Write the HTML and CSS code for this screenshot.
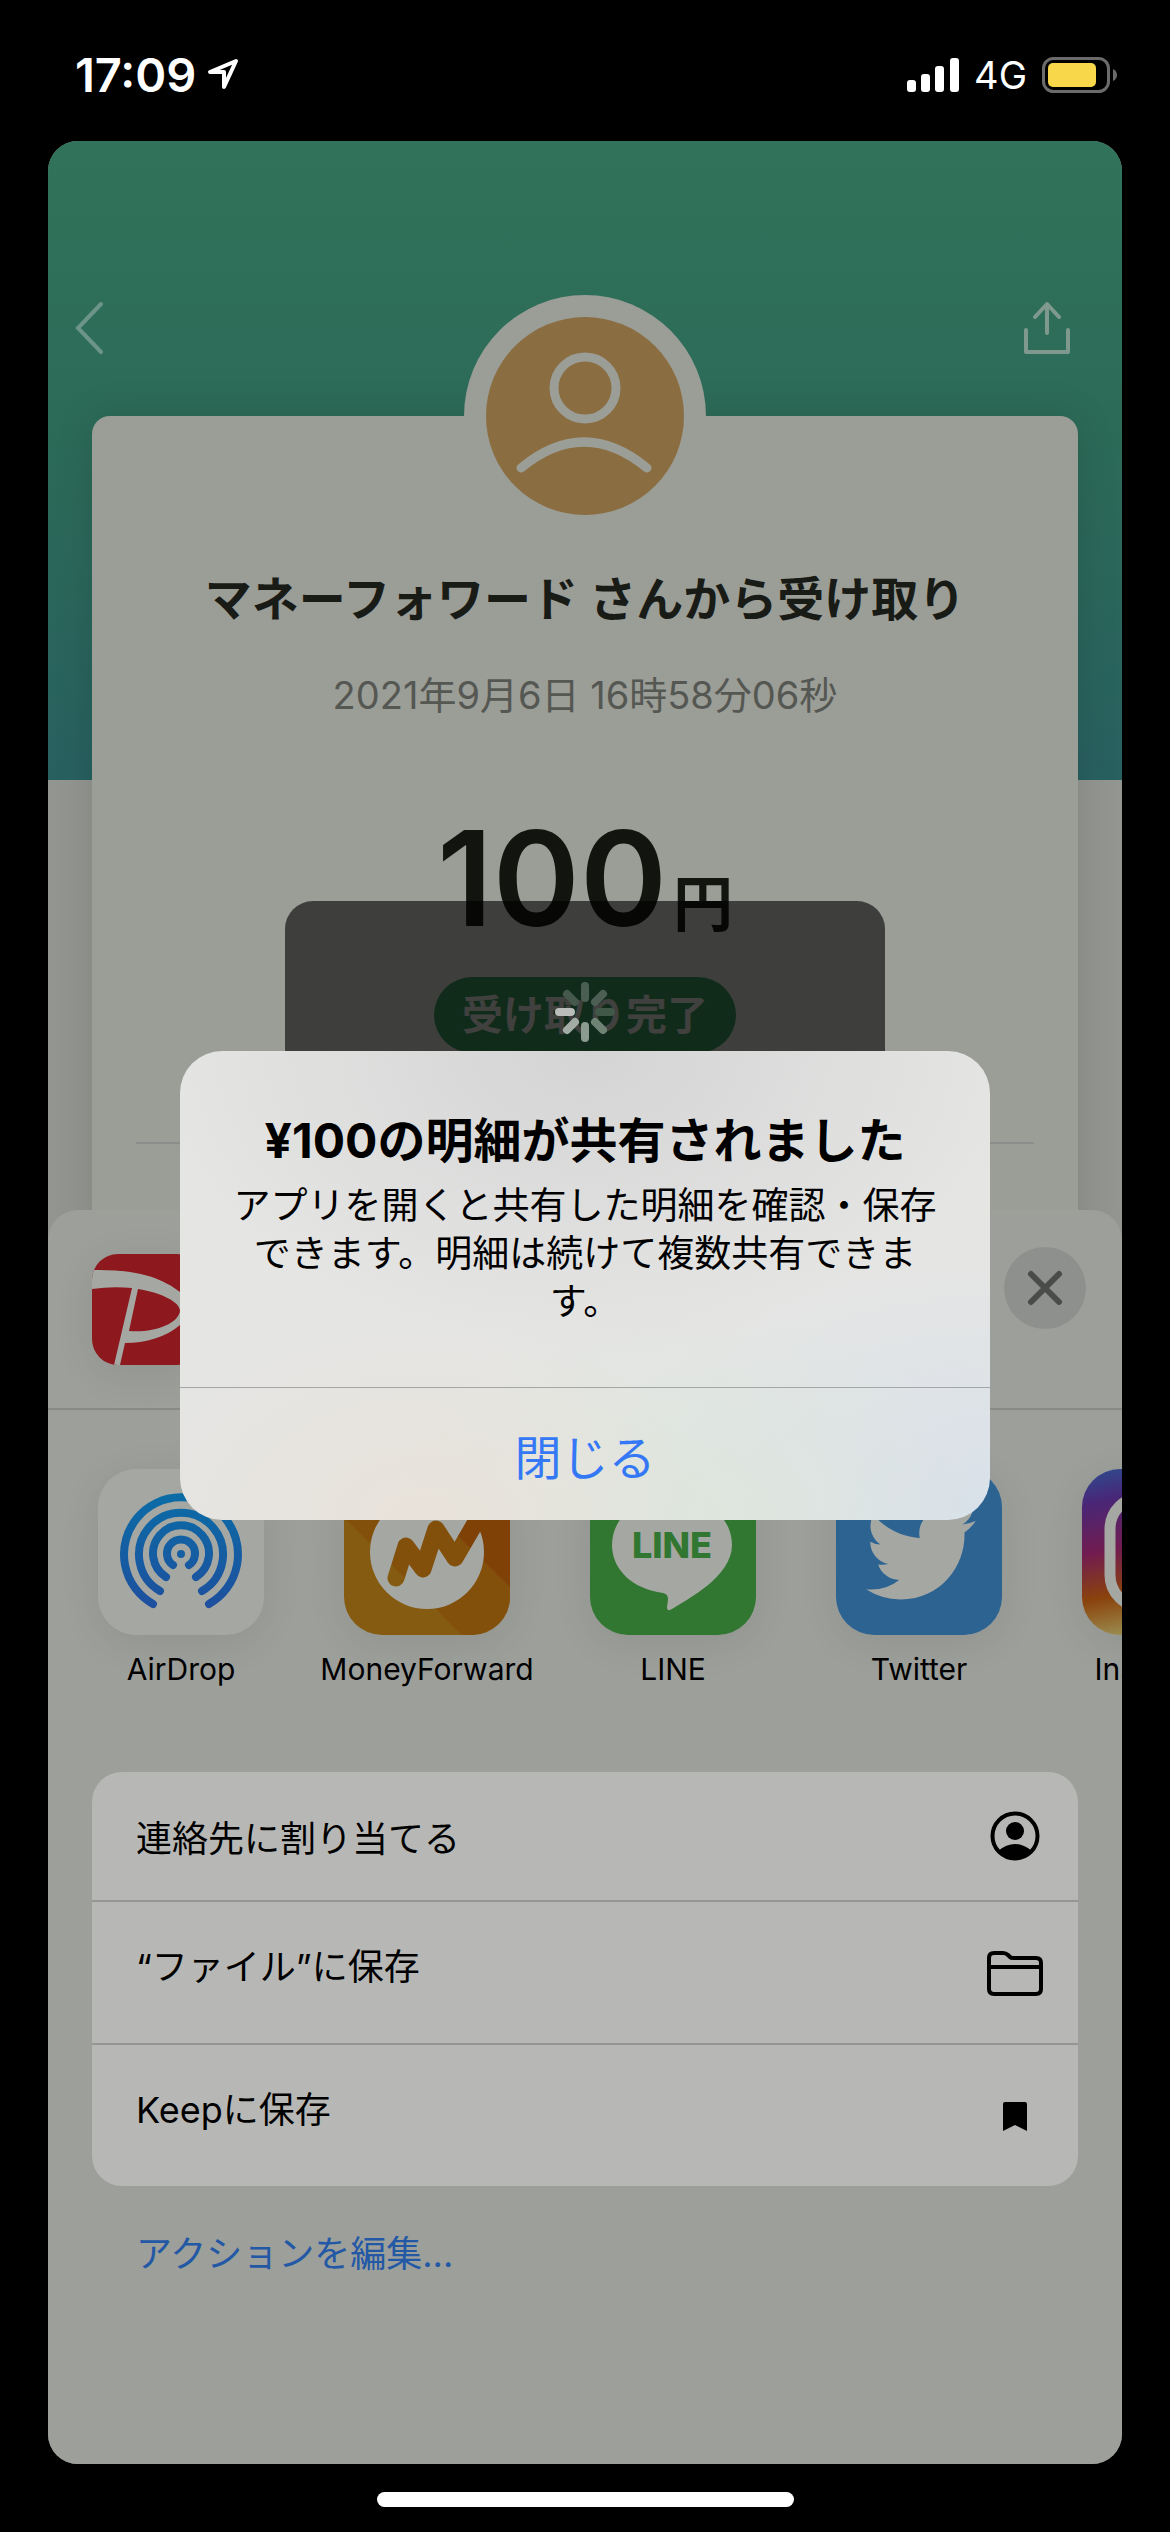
FILE: index.html
```html
<!doctype html>
<html lang="ja">
<head>
<meta charset="utf-8">
<meta name="viewport" content="width=device-width">
<title>明細の共有</title>
<link rel="stylesheet" href="styles.css">
</head>

<body>

<header class="status">
    <div class="status-left">
        <span class="time">17:09</span>
        <svg width="34" height="34" viewBox="0 0 34 34"><path d="M30 3L4 14h14v15z" fill="none" stroke="#fff" stroke-width="4" stroke-linejoin="round"/></svg>
    </div>
    <div class="status-right">
        <svg width="52" height="34" viewBox="0 0 52 34" fill="#fff">
            <rect x="0" y="22" width="9" height="12" rx="3"/>
            <rect x="14" y="16" width="9" height="18" rx="3"/>
            <rect x="28" y="8" width="9" height="26" rx="3"/>
            <rect x="43" y="0" width="9" height="34" rx="3"/>
        </svg>
        <span class="network">4G</span>
        <svg width="76" height="36" viewBox="0 0 76 36">
            <rect x="1.5" y="1.5" width="65" height="33" rx="10" fill="none" stroke="#6b6b6b" stroke-width="3"/>
            <rect x="6" y="6" width="48" height="24" rx="5" fill="#f8d74a"/>
            <path d="M71 12q4 2 4 6t-4 6z" fill="#6b6b6b"/>
        </svg>
    </div>
</header>

<main class="screen">
    <section class="receipt">
        <nav class="nav">
            <button class="icon-button" aria-label="戻る">
                <svg width="30" height="54" viewBox="0 0 30 54"><path d="M27 3L4 27l23 24" fill="none" stroke="#6c9488" stroke-width="4" stroke-linecap="round"/></svg>
            </button>
            <button class="icon-button" aria-label="共有">
                <svg width="48" height="54" viewBox="0 0 48 54" fill="none" stroke="#80998f" stroke-width="4" stroke-linecap="round" stroke-linejoin="round"><path d="M24 32V4M12 16L24 3l12 13M3 29v22h42V29"/></svg>
            </button>
        </nav>
        <div class="card">
            <div class="avatar">
                <svg width="198" height="198" viewBox="0 0 198 198" fill="none" stroke="#9b9d97" stroke-width="9">
                    <circle cx="99" cy="99" r="99" fill="#8a6e41" stroke="none"/>
                    <circle cx="99" cy="71" r="31"/>
                    <path d="M35 151Q98 99 161 151" stroke-linecap="round"/>
                </svg>
            </div>
            <h1 class="sender">マネーフォワード さんから受け取り</h1>
            <p class="date">2021年9月6日 16時58分06秒</p>
            <p class="amount">100<span class="yen">円</span></p>
            <p class="state">受け取り完了</p>
            <hr class="card-line">
        </div>
        <!-- 読み込み中 -->
        <div class="hud">
            <svg width="64" height="64" viewBox="-32 -32 64 64" stroke-width="8" stroke-linecap="round">
                <path d="M0-14V-26" stroke="#4a5f51"/>
                <path d="M10-10l8-8" stroke="#4d5f54"/>
                <path d="M14 0H26" stroke="#415849"/>
                <path d="M10 10l8 8" stroke="#6f8375"/>
                <path d="M0 14V26" stroke="#8b9b90"/>
                <path d="M-10 10l-8 8" stroke="#a3aba5"/>
                <path d="M-14 0H-26" stroke="#b9bcb9"/>
                <path d="M-10-10l-8-8" stroke="#44594b"/>
            </svg>
        </div>
    </section>

    <section class="sheet">
        <div class="sheet-head">
            <svg class="tile small" width="111" height="111" viewBox="0 0 111 111">
                <rect width="111" height="111" fill="#8d181d"/>
                <path d="M0 16C45 15 70 24 88 38C101 50 101 62 88 71C74 83 54 89 33 89L28 111H22L40 34Q20 32 0 35zM46 35L37 77C62 79 86 70 88 57C88 48 70 39 46 35z" fill="#a5a7a3"/>
            </svg>
            <button class="close" aria-label="閉じる">
                <svg width="36" height="36" viewBox="0 0 36 36"><path d="M4 4l28 28M32 4L4 32" stroke="#4a4c4a" stroke-width="6" stroke-linecap="round"/></svg>
            </button>
        </div>

        <div class="apps">
            <a class="app" href="#">
                <svg class="tile" width="166" height="166" viewBox="0 0 166 166">
                    <defs><linearGradient id="air" gradientUnits="userSpaceOnUse" x1="0" y1="26" x2="0" y2="140"><stop offset="0" stop-color="#0b6ca6"/><stop offset="1" stop-color="#1e4f9e"/></linearGradient></defs>
                    <rect width="166" height="166" fill="#a5a7a3"/>
                    <g fill="none" stroke="url(#air)" stroke-width="8" stroke-linecap="round">
                        <path d="M55 135A57 57 0 1 1 111 135"/>
                        <path d="M62 122A42 42 0 1 1 104 122"/>
                        <path d="M68 108A28 28 0 1 1 98 108"/>
                        <path d="M75 96A14 14 0 1 1 91 96"/>
                    </g>
                    <circle cx="83" cy="85" r="4" fill="#155fa2"/>
                </svg>
                <span>AirDrop</span>
            </a>
            <a class="app" href="#">
                <svg class="tile" width="166" height="166" viewBox="0 0 166 166">
                    <mask id="mf">
                        <circle cx="83" cy="83" r="57" fill="#fff"/>
                        <path d="M52 109L62 77L79 100L92 60L111 89L150 22" fill="none" stroke="#000" stroke-width="17" stroke-linecap="round" stroke-linejoin="round"/>
                    </mask>
                    <rect width="166" height="166" fill="#855a11"/>
                    <path d="M0 48L118 166H166V0H0z" fill="#82500b"/>
                    <path d="M46 0L166 118V0z" fill="#7f4106"/>
                    <rect width="166" height="166" fill="#a5a7a3" mask="url(#mf)"/>
                </svg>
                <span>MoneyForward</span>
            </a>
            <a class="app" href="#">
                <svg class="tile" width="166" height="166" viewBox="0 0 166 166">
                    <rect width="166" height="166" fill="#317731"/>
                    <path d="M142 76C142 48 116 27 82 27S22 48 22 76C22 101 43 120 73 124C77 125 78 127 78 131L77 138Q77 143 82 140C96 131 142 108 142 76z" fill="#a5a7a3"/>
                    <text class="line-logo" x="82" y="89" text-anchor="middle">LINE</text>
                </svg>
                <span>LINE</span>
            </a>
            <a class="app" href="#">
                <svg class="tile" width="166" height="166" viewBox="0 0 166 166">
                    <rect width="166" height="166" fill="#2d6391"/>
                    <path transform="translate(30 31) scale(4.57)" fill="#a5a7a3" d="M23.953 4.57a10 10 0 01-2.825.775 4.958 4.958 0 002.163-2.723c-.951.555-2.005.959-3.127 1.184a4.92 4.92 0 00-8.384 4.482C7.69 8.095 4.067 6.13 1.64 3.162a4.822 4.822 0 00-.666 2.475c0 1.71.87 3.213 2.188 4.096a4.904 4.904 0 01-2.228-.616v.06a4.923 4.923 0 003.946 4.827 4.996 4.996 0 01-2.212.085 4.936 4.936 0 004.604 3.417 9.867 9.867 0 01-6.102 2.105c-.39 0-.779-.023-1.17-.067a13.995 13.995 0 007.557 2.209c9.053 0 13.998-7.496 13.998-13.985 0-.21 0-.42-.015-.63A9.935 9.935 0 0024 4.59z"/>
                </svg>
                <span>Twitter</span>
            </a>
            <a class="app" href="#">
                <svg class="tile" width="166" height="166" viewBox="0 0 166 166">
                    <defs><linearGradient id="insta" x1="0.1" y1="0" x2="0.3" y2="1"><stop offset="0" stop-color="#2f4a8d"/><stop offset="0.18" stop-color="#482778"/><stop offset="0.48" stop-color="#711c50"/><stop offset="0.75" stop-color="#8a420c"/><stop offset="1" stop-color="#9c9052"/></linearGradient></defs>
                    <rect width="166" height="166" fill="url(#insta)"/>
                    <rect x="28" y="28" width="110" height="110" rx="32" fill="none" stroke="#a5a7a3" stroke-width="11"/>
                    <circle cx="83" cy="83" r="26" fill="none" stroke="#a5a7a3" stroke-width="11"/>
                </svg>
                <span>Instagram</span>
            </a>
        </div>

        <div class="actions">
            <button class="action">
                <span>連絡先に割り当てる</span>
                <svg width="58" height="50" viewBox="0 0 58 50">
                    <circle cx="29" cy="25" r="22.5" fill="none" stroke="#000" stroke-width="4"/>
                    <ellipse cx="29" cy="20" rx="9" ry="9"/>
                    <path d="M12 40q17-14 34 0q-17 18-34 0z"/>
                </svg>
            </button>
            <button class="action tall">
                <span>“ファイル”に保存</span>
                <svg width="58" height="50" viewBox="0 0 58 50" fill="none" stroke="#000" stroke-width="4">
                    <path d="M3 10q0-5 5-5h9q3 0 5 2l2 2q1 1 3 1h23q5 0 5 5v26q0 5-5 5h-42q-5 0-5-5zM3 19h52"/>
                </svg>
            </button>
            <button class="action tall">
                <span>Keepに保存</span>
                <svg width="58" height="50" viewBox="0 0 58 50"><path d="M17 13q0-2 2-2h20q2 0 2 2v27l-12-6-12 6z"/></svg>
            </button>
        </div>
        <a class="edit" href="#">アクションを編集...</a>
    </section>

    <div class="dialog" role="alertdialog" aria-labelledby="dialogTitle">
        <div class="dialog-body">
            <h2 id="dialogTitle">¥100の明細が共有されました</h2>
            <p>アプリを開くと共有した明細を確認・保存できます。明細は続けて複数共有できます。</p>
        </div>
        <button class="dialog-close">閉じる</button>
    </div>
</main>

<div class="home"></div>

</body>
</html>
```

FILE: styles.css
```css
*{
    box-sizing: border-box;
}
body{
    margin: 0;
    background: #000;
    color: #000;
    font-family: Inter, "Noto Sans CJK JP", sans-serif;
}
h1, h2, p{
    margin: 0;
}
svg{
    display: block;
    flex: none;
}
button{
    padding: 0;
    border: 0;
    background: none;
    color: inherit;
    font: inherit;
}
a{
    color: inherit;
    text-decoration: none;
}

/* ステータスバー */
.status{
    display: flex;
    justify-content: space-between;
    align-items: center;
    height: 141px;
    padding: 8px 52px 0 75px;
    color: #fff;
}
.status-left,
.status-right{
    display: flex;
    align-items: center;
}
.status-left{
    gap: 10px;
}
.status-right{
    gap: 15px;
}
.time{
    font-size: 47px;
    font-weight: 600;
}
.network{
    font-size: 38px;
}

.screen{
    position: relative;
    margin: 0 48px;
    border-radius: 30px;
    overflow: hidden;
    background: #929590;
}

/* 明細 */
.receipt{
    position: relative;
    padding: 154px 44px 0;
    background: linear-gradient(#30735a, #2c6958 340px, #286060 639px, transparent 639px);
}
.nav{
    display: flex;
    justify-content: space-between;
    height: 121px;
    margin: 0 -18px;
    padding: 6px 0 0;
}
.nav .icon-button{
    align-self: flex-start;
}
.nav .icon-button:last-child{
    margin-right: 25px;
}
.card{
    display: flex;
    flex-direction: column;
    align-items: center;
    padding: 0 44px 100px;
    border-radius: 18px 18px 0 0;
    background: #9b9d97;
    box-shadow: 0 0 40px rgba(0, 0, 0, 0.12);
}
.avatar{
    margin-top: -121px;
    padding: 22px;
    border-radius: 50%;
    background: #9b9d97;
}
.sender{
    margin-top: 30px;
    color: #191b16;
    font-size: 47px;
    line-height: 64px;
    font-weight: 700;
}
.date{
    margin-top: 36px;
    color: #555752;
    font-size: 38px;
    line-height: 56px;
}
.amount{
    margin-top: 75px;
    color: #12140f;
    font-size: 132px;
    line-height: 160px;
    font-weight: 600;
}
.yen{
    margin-left: 6px;
    font-size: 60px;
    line-height: 60px;
    font-weight: 700;
}
.state{
    margin-top: 19px;
    padding: 0 28px;
    border-radius: 38px;
    background: #2c6d45;
    color: #a0a09c;
    font-size: 41px;
    line-height: 76px;
    font-weight: 600;
}
.card-line{
    align-self: stretch;
    height: 2px;
    margin: 89px 0 0;
    border: 0;
    background: #8b8e8a;
}
.hud{
    position: absolute;
    top: 760px;
    left: 50%;
    width: 600px;
    height: 222px;
    margin-left: -300px;
    display: flex;
    justify-content: center;
    align-items: center;
    border-radius: 28px;
    background: rgba(0, 0, 0, 0.6);
}

/* 共有シート */
.sheet{
    position: relative;
    margin-top: -34px;
    padding-bottom: 182px;
    border-radius: 30px 30px 0 0;
    background: #9d9f9b;
}
.sheet-head{
    display: flex;
    justify-content: space-between;
    align-items: center;
    height: 200px;
    padding: 0 36px 0 44px;
    border-bottom: 2px solid #888a87;
}
.tile{
    border-radius: 38px;
    box-shadow: 0 8px 40px rgba(0, 0, 0, 0.08);
}
.tile.small{
    border-radius: 26px;
}
.close{
    display: flex;
    justify-content: center;
    align-items: center;
    width: 82px;
    height: 82px;
    margin-bottom: 42px;
    border-radius: 50%;
    background: #8e908d;
}
.apps{
    display: flex;
    gap: 20px;
    padding: 59px 20px 81px;
    overflow: hidden;
}
.app{
    flex: none;
    display: flex;
    flex-direction: column;
    align-items: center;
    gap: 12px;
    width: 226px;
    font-size: 30px;
    line-height: 44px;
}
.line-logo{
    fill: #317731;
    font-size: 36px;
    font-weight: 800;
}
.actions{
    margin: 0 44px;
    border-radius: 30px;
    background: #b7b8b5;
}
.action{
    display: flex;
    justify-content: space-between;
    align-items: center;
    width: 100%;
    height: 128px;
    padding: 0 34px 0 44px;
    font-size: 36px;
    text-align: left;
}
.action.tall{
    height: 143px;
    border-top: 2px solid #959693;
}
.action.tall span{
    padding-bottom: 18px;
}
.edit{
    display: block;
    width: fit-content;
    margin: 40px 88px 0;
    color: #2358a5;
    font-size: 36px;
    line-height: 56px;
}

/* アラート */
.dialog{
    position: absolute;
    top: 910px;
    left: 50%;
    width: 810px;
    margin-left: -405px;
    border-radius: 42px;
    overflow: hidden;
    background:
        radial-gradient(ellipse 440px 300px at 50% 0, #d4d4d4, rgba(216, 216, 216, 0.6) 50%, transparent),
        radial-gradient(ellipse 300px 200px at 30% 100%, #e8e2d9, transparent),
        radial-gradient(ellipse 300px 220px at 62% 100%, #dde6dd, transparent),
        radial-gradient(ellipse 400px 260px at 100% 100%, #d8e1ea, transparent),
        #e5e5e4;
    text-align: center;
}
.dialog-body{
    padding: 57px 48px 61px;
}
.dialog h2{
    font-size: 48px;
    line-height: 66px;
    font-weight: 700;
}
.dialog p{
    margin-top: 8px;
    font-size: 37px;
    line-height: 48px;
}
.dialog-close{
    width: 100%;
    height: 133px;
    border-top: 1px solid #a5a7a7;
    color: #3478f6;
    font-size: 47px;
}

.home{
    width: 417px;
    height: 15px;
    margin: 28px auto 0;
    border-radius: 8px;
    background: #fff;
}
```
